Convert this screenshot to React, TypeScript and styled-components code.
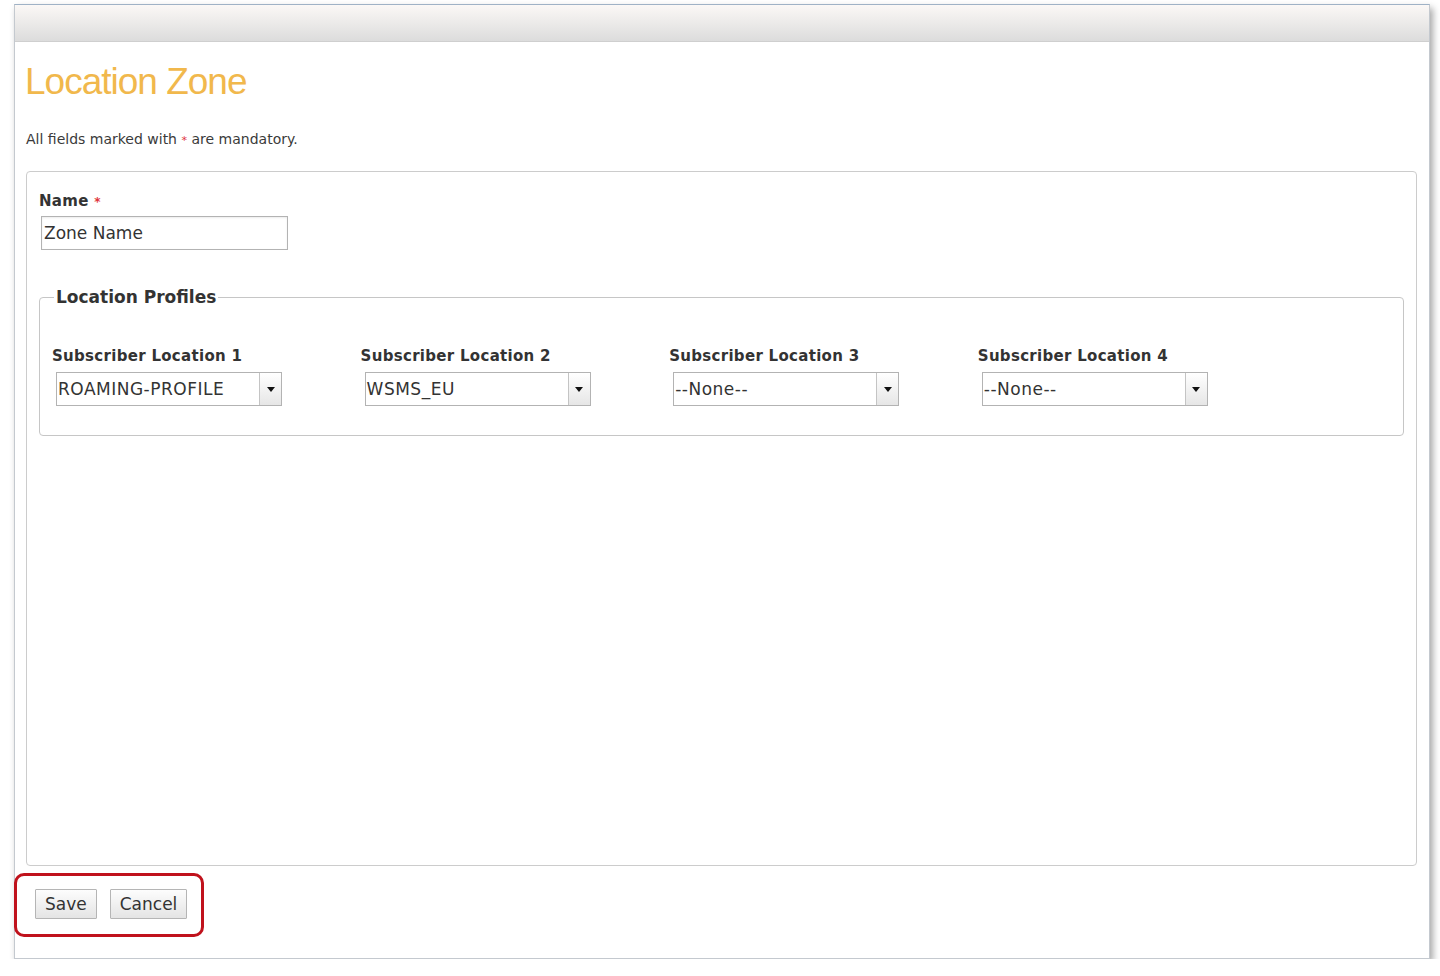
import React from "react";
import styled, {createGlobalStyle} from "styled-components";

const GlobalStyle = createGlobalStyle`
  body {
    margin: 0;
    background: #ffffff;
    font-family: "DejaVu Sans", Verdana, sans-serif;
    color: #333333;
  }
`

const locations = [
    {label: 'Subscriber Location 1', value: 'ROAMING-PROFILE'},
    {label: 'Subscriber Location 2', value: 'WSMS_EU'},
    {label: 'Subscriber Location 3', value: '--None--'},
    {label: 'Subscriber Location 4', value: '--None--'},
]

const Arrow = () => (
    <svg width="8" height="5" viewBox="0 0 8 5">
        <path d="M0 0 L8 0 L4 5 Z" fill="#111111" />
    </svg>
)

const SelectBox: React.FC<{ value: string }> = (props) => (
    <StyledSelect>
        <SelectValue>{props.value}</SelectValue>
        <SelectButton>
            <Arrow />
        </SelectButton>
    </StyledSelect>
)

export default function App() {
    return (
        <>
            <GlobalStyle />
            <Window>
                <TopBar />
                <Body>
                    <Title>Location Zone</Title>
                    <Hint>All fields marked with <Star>*</Star> are mandatory.</Hint>
                    <Panel>
                        <FieldLabel>Name <Star>*</Star></FieldLabel>
                        <TextInput defaultValue={'Zone Name'} />
                        <Fieldset>
                            <Legend>Location Profiles</Legend>
                            <LocationGrid>
                                {locations.map((loc, i) => (
                                    <LocationCell key={i}>
                                        <FieldLabel>{loc.label}</FieldLabel>
                                        <SelectBox value={loc.value} />
                                    </LocationCell>
                                ))}
                            </LocationGrid>
                        </Fieldset>
                    </Panel>
                </Body>
                <Highlight>
                    <Button>Save</Button>
                    <Button>Cancel</Button>
                </Highlight>
            </Window>
        </>
    )
}

const Window = styled.div`
  box-sizing: border-box;
  margin: 4px 0 0 14px;
  width: 1416px;
  height: 955px;
  border: 1px solid #c4c9cf;
  border-top-color: #9fb2c6;
  background: #ffffff;
  box-shadow: 3px 4px 7px rgba(0, 0, 0, 0.35);
`

const TopBar = styled.div`
  height: 36px;
  background: linear-gradient(#fbf8f6, #dcdcdc);
  border-bottom: 1px solid #cfcfcf;
`

const Body = styled.div`
  padding: 0 12px 0 11px;
`

const Title = styled.h1`
  margin: 18px 0 0 -1px;
  font-family: "Liberation Sans", Tahoma, sans-serif;
  font-weight: normal;
  font-size: 37px;
  line-height: 44px;
  letter-spacing: -1px;
  color: #f1b84c;
`

const Hint = styled.div`
  margin-top: 25px;
  font-size: 14px;
  line-height: 20px;
  color: #3a3a3a;
`

const Star = styled.span`
  color: #e0343a;
  font-size: 0.8em;
`

const Panel = styled.div`
  box-sizing: border-box;
  margin-top: 20px;
  height: 695px;
  border: 1px solid #cccccc;
  border-radius: 4px;
  padding: 19px 12px 0 12px;
`

const FieldLabel = styled.div`
  font-size: 15px;
  font-weight: bold;
  line-height: 20px;
  letter-spacing: 0.3px;
  color: #333333;
`

const TextInput = styled.input`
  box-sizing: border-box;
  display: block;
  margin: 4px 0 0 2px;
  width: 247px;
  height: 34px;
  padding: 0 2px;
  border: 1px solid #b3b3b3;
  box-shadow: inset 0 1px 2px rgba(0, 0, 0, 0.08);
  font-family: "DejaVu Sans", Verdana, sans-serif;
  font-size: 17px;
  color: #333333;
  outline: none;
`

const Fieldset = styled.fieldset`
  margin: 35px 0 0 0;
  padding: 0 12px 29px 12px;
  border: 1px solid #c6c6c6;
  border-radius: 4px;
`

const Legend = styled.legend`
  margin-left: 2px;
  padding: 0 2px;
  font-size: 17px;
  font-weight: bold;
  line-height: 24px;
  color: #333333;
`

const LocationGrid = styled.div`
  display: grid;
  grid-template-columns: repeat(4, 308.6px);
  padding-top: 37px;
`

const LocationCell = styled.div`
  display: flex;
  flex-direction: column;
  gap: 6px;
`

const StyledSelect = styled.div`
  box-sizing: border-box;
  display: flex;
  margin-left: 4px;
  width: 226px;
  height: 34px;
  border: 1px solid #b3b3b3;
  background: #ffffff;
`

const SelectValue = styled.div`
  flex: 1;
  padding-left: 1px;
  font-size: 17px;
  line-height: 32px;
  letter-spacing: 0.5px;
  color: #333333;
  white-space: nowrap;
  overflow: hidden;
`

const SelectButton = styled.div`
  width: 21px;
  display: flex;
  align-items: center;
  justify-content: center;
  border-left: 1px solid #c4c4c4;
  background: linear-gradient(#ffffff, #e6e6e6);
`

const Highlight = styled.div`
  box-sizing: border-box;
  display: flex;
  gap: 13px;
  margin: 7px 0 0 -1px;
  width: 190px;
  height: 64px;
  padding: 13px 0 0 18px;
  border: 3px solid #c0121c;
  border-radius: 10px;
`

const Button = styled.button`
  box-sizing: border-box;
  height: 30px;
  padding: 0 9px;
  border: 1px solid #b5b5b5;
  border-radius: 1px;
  background: linear-gradient(#fdfdfd, #e4e4e4);
  font-family: "DejaVu Sans", Verdana, sans-serif;
  font-size: 17px;
  color: #333333;
`
